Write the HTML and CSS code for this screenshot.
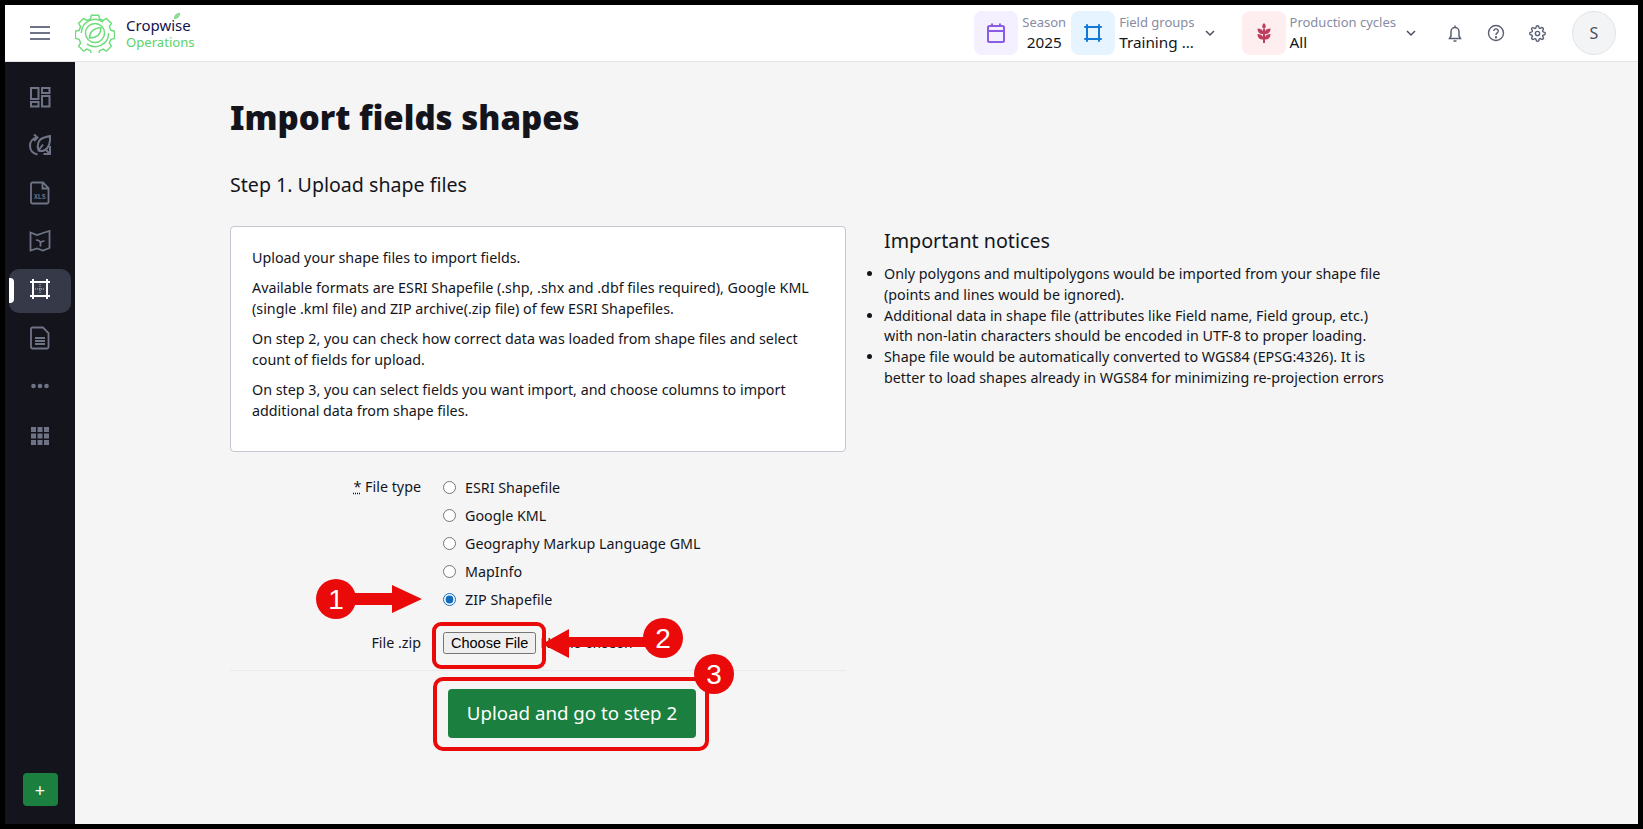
FILE: index.html
```html
<!DOCTYPE html>
<html lang="en">
<head>
    <meta charset="UTF-8">
    <meta name="viewport" content="width=device-width, initial-scale=1.0">
    <title>Cropwise Operations - Import fields shapes</title>
    <link rel="stylesheet" href="styles.css">
</head>
<body>
    <div class="app">
        <header class="topbar">
            <button class="burger" aria-label="Menu"><span></span><span></span><span></span></button>
            <div class="logo">
                <svg class="logo-mark" viewBox="0 0 44 44" width="40" height="40" fill="none" stroke="#6fdc7c" stroke-width="1.600">
                    <path d="M18 2.500h8l1 4 4 1.700 3.500-2.200 5.500 5.500-2.200 3.500 1.700 4 4 1v8l-4 1-1.700 4 2.200 3.500-5.500 5.500-3.500-2.200-4 1.700-1 4h-8l-1-4-4-1.700-3.500 2.200-5.500-5.500 2.200-3.500-1.700-4-4-1v-8l4-1 1.700-4-2.200-3.500 5.500-5.500 3.500 2.200 4-1.700z"/>
                    <path d="M7 22a15 15 0 0 1 24-12M37 22a15 15 0 0 1-24 12"/>
                    <circle cx="22" cy="22" r="10.500"/>
                    <path d="M16 27.500c0-6.500 4.500-10.500 12.500-11.500 0 7-4 11.500-12.500 11.500z"/>
                </svg>
                <div class="logo-text">
                    <span class="logo-name">Cropwise<svg class="logo-leaf" viewBox="0 0 10 10" width="8" height="8"><path d="M1 9c0-5 3-8 8-8 0 5-3 8-8 8z" fill="#8fdc97"/></svg></span>
                    <span class="logo-product">Operations</span>
                </div>
            </div>

            <div class="topbar-right">
                <div class="selector season">
                    <div class="tile tile-purple">
                        <svg viewBox="0 0 24 24" width="24" height="24" fill="none" stroke="#8a5ce6" stroke-width="2"><rect x="4" y="5" width="16" height="16" rx="1.500"/><path d="M4 10h16M8 2.500V5M16 2.500V5"/></svg>
                    </div>
                    <div class="selector-text centered">
                        <span class="selector-label">Season</span>
                        <span class="selector-value">2025</span>
                    </div>
                </div>
                <div class="selector groups">
                    <div class="tile tile-blue">
                        <svg viewBox="0 0 24 24" width="24" height="24" fill="none" stroke="#1479d6" stroke-width="2" stroke-linecap="round"><path d="M6 4v16M18 4v16M4 6h16M4 18h16"/></svg>
                    </div>
                    <div class="selector-text">
                        <span class="selector-label">Field groups</span>
                        <span class="selector-value">Training ...</span>
                    </div>
                    <svg class="chevron" viewBox="0 0 12 12" width="12" height="12" fill="none" stroke="#4a4f5c" stroke-width="1.500"><path d="M2 4l4 4 4-4"/></svg>
                </div>
                <div class="selector cycles">
                    <div class="tile tile-red">
                        <svg viewBox="0 0 24 24" width="24" height="24" fill="#bd3f5f"><path d="M12 2c1.800 1.400 2.200 3.200 1.200 5.500h-2.400C9.800 5.200 10.200 3.400 12 2zM5.500 7.500c2.800 0 4.800 1 5.500 2.800V13c-3.500 0-5.500-1.800-5.500-5.500zM18.500 7.500c-2.800 0-4.800 1-5.500 2.800V13c3.500 0 5.500-1.800 5.500-5.500zM5.500 13c2.800 0 4.800 1 5.500 2.800v2.700c-3.500 0-5.500-1.800-5.500-5.500zM18.500 13c-2.800 0-4.800 1-5.500 2.800v2.700c3.500 0 5.500-1.800 5.500-5.500zM11 8h2v14h-2z"/></svg>
                    </div>
                    <div class="selector-text">
                        <span class="selector-label">Production cycles</span>
                        <span class="selector-value">All</span>
                    </div>
                    <svg class="chevron" viewBox="0 0 12 12" width="12" height="12" fill="none" stroke="#4a4f5c" stroke-width="1.500"><path d="M2 4l4 4 4-4"/></svg>
                </div>
                <div class="tools">
                    <svg viewBox="0 0 20 20" width="20" height="20" fill="none" stroke="#5a5f73" stroke-width="1.500"><path d="M4.500 15.500h11l-1.500-2.500V8.500a4 4 0 0 0-8 0V13zM10 2.500v2M8.500 18h3"/></svg>
                    <svg viewBox="0 0 20 20" width="20" height="20" fill="none" stroke="#5a5f73" stroke-width="1.400"><circle cx="10" cy="10" r="7.500"/><path d="M7.800 8a2.200 2.200 0 1 1 3.400 1.900c-.8.500-1.200 1-1.200 2"/><circle cx="10" cy="14.200" r=".5"/></svg>
                    <svg class="gear" viewBox="0 0 24 24" fill="none" stroke="#5a5f73" stroke-width="2"><circle cx="12" cy="12" r="3"/><path d="M19.400 15a1.650 1.650 0 0 0 .33 1.820l.06.06a2 2 0 0 1 0 2.830 2 2 0 0 1-2.830 0l-.06-.06a1.650 1.650 0 0 0-1.820-.33 1.650 1.650 0 0 0-1 1.510V21a2 2 0 0 1-2 2 2 2 0 0 1-2-2v-.09A1.650 1.650 0 0 0 9 19.400a1.650 1.650 0 0 0-1.820.33l-.06.06a2 2 0 0 1-2.830 0 2 2 0 0 1 0-2.830l.06-.06a1.650 1.650 0 0 0 .33-1.820 1.650 1.650 0 0 0-1.510-1H3a2 2 0 0 1-2-2 2 2 0 0 1 2-2h.09A1.650 1.650 0 0 0 4.600 9a1.650 1.650 0 0 0-.33-1.820l-.06-.06a2 2 0 0 1 0-2.830 2 2 0 0 1 2.830 0l.06.06a1.650 1.650 0 0 0 1.820.33H9a1.650 1.650 0 0 0 1-1.510V3a2 2 0 0 1 2-2 2 2 0 0 1 2 2v.09a1.650 1.650 0 0 0 1 1.510 1.650 1.650 0 0 0 1.820-.33l.06-.06a2 2 0 0 1 2.830 0 2 2 0 0 1 0 2.830l-.06.06a1.650 1.650 0 0 0-.33 1.820V9a1.650 1.650 0 0 0 1.510 1H21a2 2 0 0 1 2 2 2 2 0 0 1-2 2h-.09a1.650 1.650 0 0 0-1.510 1z"/></svg>
                </div>
                <div class="avatar">S</div>
            </div>
        </header>

        <div class="body-row">
            <nav class="sidebar">
                <a class="nav-item"><svg viewBox="0 0 24 24" fill="none" stroke="#6e7385" stroke-width="2"><rect x="3" y="3" width="7.500" height="11"/><rect x="14" y="3" width="7.500" height="5"/><rect x="14" y="11" width="7.500" height="10.500"/><rect x="3" y="17" width="7.500" height="4.500"/></svg></a>
                <a class="nav-item"><svg viewBox="0 0 24 24" fill="none" stroke="#6e7385" stroke-width="2"><path d="M9.500 21.500C4.500 20.500 2 17 2 12.500 2 9 4.500 5.500 8.500 4.500M6 1.500l3.500 3L6 8"/><path d="M10.500 17.500C8.500 12 10.500 6.500 15 5c2-.7 4.500-1.500 7-2 .5 6-1 11.500-5 14-2 1-4.500 1.500-6.500.5zM10.500 17.500l4.500-6"/><path d="M22 13v8h-6.500M22 21l-5-5"/></svg></a>
                <a class="nav-item"><svg viewBox="0 0 24 24" fill="none" stroke="#6e7385" stroke-width="1.800"><path d="M4.500 1.500H15l5.500 5.500v14a1.500 1.500 0 0 1-1.500 1.500H4.500A1.500 1.500 0 0 1 3 21V3a1.500 1.500 0 0 1 1.500-1.500zM14.500 1.500V7.500h6"/><text class="nav-xls" x="11.800" y="17.500" text-anchor="middle">XLS</text></svg></a>
                <a class="nav-item"><svg viewBox="0 0 24 24" fill="none" stroke="#6e7385" stroke-width="1.800"><path d="M2.500 3.500l6.500 2.500 6-2 6.500-2v17L15 21.500 9 19.500l-6.500 2z"/><path d="M12.500 17.500v-3c0-2-2-3.500-4.500-3.500M12.500 14.500c0-1.500 2-2.500 4-2.500" stroke-width="1.700"/></svg></a>
                <a class="nav-item active"><span class="nav-marker"></span><svg viewBox="0 0 24 24" fill="none" stroke="#fff" stroke-width="2"><path d="M5 2v20M19 2v20M2 5h20M2 19h20"/><path d="M12 7v10M7 12h10" stroke-width="1" stroke-dasharray="1 1" stroke="#c9ccd6"/></svg></a>
                <a class="nav-item"><svg viewBox="0 0 24 24" fill="none" stroke="#6e7385" stroke-width="1.800"><path d="M4.500 1.500H15l5.500 5.500v14a1.500 1.500 0 0 1-1.500 1.500H4.500A1.500 1.500 0 0 1 3 21V3a1.500 1.500 0 0 1 1.500-1.500z"/><path d="M7 12h10M7 15h10M7 18h10" stroke-width="1.800"/></svg></a>
                <a class="nav-item"><svg viewBox="0 0 24 24" fill="#6e7385"><circle cx="5.500" cy="12" r="2.300"/><circle cx="12" cy="12" r="2.300"/><circle cx="18.500" cy="12" r="2.300"/></svg></a>
                <a class="nav-item nav-last"><svg viewBox="0 0 24 24" fill="#6e7385"><rect x="3" y="3" width="5" height="5"/><rect x="9.500" y="3" width="5" height="5"/><rect x="16" y="3" width="5" height="5"/><rect x="3" y="9.500" width="5" height="5"/><rect x="9.500" y="9.500" width="5" height="5"/><rect x="16" y="9.500" width="5" height="5"/><rect x="3" y="16" width="5" height="5"/><rect x="9.500" y="16" width="5" height="5"/><rect x="16" y="16" width="5" height="5"/></svg></a>
                <button class="add-btn" aria-label="Add">+</button>
            </nav>

            <main class="content">
                <h1>Import fields shapes</h1>
                <h2>Step 1. Upload shape files</h2>
                <div class="columns">
                    <div class="left-col">
                        <div class="info-box">
                            <p>Upload your shape files to import fields.</p>
                            <p>Available formats are ESRI Shapefile (.shp, .shx and .dbf files required), Google KML (single .kml file) and ZIP archive(.zip file) of few ESRI Shapefiles.</p>
                            <p>On step 2, you can check how correct data was loaded from shape files and select count of fields for upload.</p>
                            <p>On step 3, you can select fields you want import, and choose columns to import additional data from shape files.</p>
                        </div>
                        <form class="upload-form">
                            <div class="form-row">
                                <label class="form-label"><abbr>*</abbr> File type</label>
                                <div class="radio-list">
                                    <label class="radio"><input type="radio" name="file_type"> ESRI Shapefile</label>
                                    <label class="radio"><input type="radio" name="file_type"> Google KML</label>
                                    <label class="radio"><input type="radio" name="file_type"> Geography Markup Language GML</label>
                                    <label class="radio"><input type="radio" name="file_type"> MapInfo</label>
                                    <label class="radio"><input type="radio" name="file_type" checked> ZIP Shapefile</label>
                                </div>
                            </div>
                            <div class="form-row file-row">
                                <label class="form-label">File .zip</label>
                                <input type="file" class="file-input">
                            </div>
                            <div class="form-actions">
                                <button type="button" class="submit-btn">Upload and go to step 2</button>
                            </div>
                        </form>
                    </div>
                    <aside class="notices">
                        <h3>Important notices</h3>
                        <ul>
                            <li>Only polygons and multipolygons would be imported from your shape file (points and lines would be ignored).</li>
                            <li>Additional data in shape file (attributes like Field name, Field group, etc.) with non-latin characters should be encoded in UTF-8 to proper loading.</li>
                            <li>Shape file would be automatically converted to WGS84 (EPSG:4326). It is better to load shapes already in WGS84 for minimizing re-projection errors</li>
                        </ul>
                    </aside>
                </div>
            </main>
        </div>

        <!-- callouts drawn on top of the screenshot -->
        <svg class="callouts" viewBox="0 0 1643 829" width="1643" height="829">
            <g fill="#ea0a0a">
                <path d="M336 593h56v-8l30 14-30 14v-8h-56z"/>
                <path d="M542 644l27-15v8h85v10h-85v11z"/>
                <circle cx="336" cy="599" r="20"/>
                <circle cx="663" cy="638" r="20"/>
                <circle cx="714" cy="674" r="20"/>
            </g>
            <g fill="none" stroke="#ea0a0a" stroke-width="4">
                <rect x="434" y="624" width="110" height="43" rx="7"/>
                <rect x="435" y="679" width="272" height="70" rx="8"/>
            </g>
            <g class="callout-num">
                <text x="336" y="609" text-anchor="middle">1</text>
                <text x="663" y="648" text-anchor="middle">2</text>
                <text x="714" y="684" text-anchor="middle">3</text>
            </g>
        </svg>
    </div>
</body>
</html>
```

FILE: styles.css
```css
* {
    box-sizing: border-box;
}

html, body {
    margin: 0;
    height: 100%;
}

body {
    background: #000;
    padding: 5px;
    font-family: "Noto Sans", sans-serif;
    font-size: 14.3px;
    color: #14151c;
    overflow: hidden;
}

.app {
    height: 100%;
    display: flex;
    flex-direction: column;
    background: #f5f5f5;
}

/* top bar */
.topbar {
    height: 57px;
    flex: none;
    display: flex;
    align-items: center;
    background: #fff;
    border-bottom: 1px solid #e2e3e6;
}

.burger {
    width: 20px;
    height: 14px;
    margin: 0 25px 0 25px;
    padding: 0;
    border: 0;
    background: none;
    display: flex;
    flex-direction: column;
    justify-content: space-between;
}

.burger span {
    display: block;
    height: 2px;
    background: #6e7385;
}

.logo {
    display: flex;
    align-items: center;
    gap: 11px;
}

.logo-text {
    display: flex;
    flex-direction: column;
    line-height: 17px;
    margin-top: 2px;
}

.logo-name {
    position: relative;
    font-size: 15px;
    color: #14134e;
}

.logo-leaf {
    position: absolute;
    left: 47px;
    top: -5px;
}

.logo-product {
    font-size: 13.1px;
    color: #5bd36a;
}

.topbar-right {
    margin-left: auto;
    display: flex;
    align-items: center;
    padding-right: 22px;
}

.selector {
    display: flex;
    align-items: center;
}

.season {
    margin-right: 5px;
}

.groups {
    margin-right: 26px;
}

.tile {
    width: 44px;
    height: 44px;
    border-radius: 8px;
    display: flex;
    align-items: center;
    justify-content: center;
    margin-right: 4px;
}

.tile-purple {
    background: #f5f0ff;
}

.tile-blue {
    background: #e6f4ff;
}

.tile-red {
    background: #ffeef0;
}

.selector-text {
    display: flex;
    flex-direction: column;
}

.selector-text.centered {
    align-items: center;
}

.selector-label {
    font-size: 13px;
    line-height: 18px;
    color: #868ca2;
}

.selector-value {
    font-size: 15.3px;
    line-height: 22px;
    color: #14151c;
}

.chevron {
    margin-left: 9px;
}

.tools {
    display: flex;
    gap: 21px;
    margin-left: 28px;
}

.gear {
    width: 17px;
    height: 17px;
    margin: 1.5px;
}

.avatar {
    width: 44px;
    height: 44px;
    margin-left: 25px;
    border-radius: 50%;
    background: #f3f4f6;
    border: 1px solid #e2e3e6;
    display: flex;
    align-items: center;
    justify-content: center;
    font-size: 16px;
    color: #4a4f5c;
}

/* sidebar */
.body-row {
    flex: 1;
    display: flex;
    min-height: 0;
}

.sidebar {
    width: 70px;
    flex: none;
    background: #14151c;
    display: flex;
    flex-direction: column;
    align-items: center;
    padding: 11px 0 18px;
}

.nav-item {
    position: relative;
    width: 62px;
    height: 48px;
    flex: none;
    display: flex;
    align-items: center;
    justify-content: center;
}

.nav-item svg {
    width: 24px;
    height: 24px;
}

.nav-item.active {
    height: 44px;
    margin: 4px 0 1px;
    padding-bottom: 4px;
    border-radius: 10px;
    background: #363a48;
}

.nav-last {
    margin-top: 2px;
}

.nav-marker {
    position: absolute;
    left: 0;
    top: 9px;
    width: 5px;
    height: 25px;
    border-radius: 0 4px 4px 0;
    background: #fff;
}

.nav-xls {
    font-family: "Liberation Mono", monospace;
    font-size: 6.500px;
    font-weight: bold;
    fill: #6e7385;
    stroke: none;
}

.add-btn {
    margin-top: auto;
    width: 35px;
    height: 33px;
    border: 0;
    border-radius: 4px;
    background: #1b7f3f;
    color: #fff;
    font-family: "Noto Sans", sans-serif;
    font-size: 18px;
    line-height: 1;
    padding: 0;
}

/* page content */
.content {
    flex: 1;
    padding: 0 0 0 155px;
    min-width: 0;
}

h1 {
    margin: 34px 0 0;
    font-size: 33px;
    line-height: 44px;
    font-weight: 900;
    color: #14151c;
}

h2 {
    margin: 30px 0 0;
    font-size: 19.6px;
    line-height: 30px;
    font-weight: 400;
}

.columns {
    display: flex;
    gap: 38px;
    margin-top: 26px;
}

.left-col {
    width: 616px;
    flex: none;
}

.info-box {
    height: 226px;
    padding: 20px 21px 0;
    background: #fff;
    border: 1px solid #c2c7d0;
    border-radius: 4px;
}

.info-box p {
    margin: 0 0 9px;
    line-height: 21px;
}

.upload-form {
    margin-top: 21px;
}

.form-row {
    display: flex;
}

.form-label {
    width: 191px;
    flex: none;
    text-align: right;
    line-height: 28px;
}

.form-label abbr {
    text-decoration: underline dotted;
}

.radio-list {
    margin-left: 21px;
    display: flex;
    flex-direction: column;
}

.radio {
    display: flex;
    align-items: center;
    height: 28px;
    gap: 9px;
}

.radio input {
    width: 13px;
    height: 13px;
    margin: 1px 0 0 1px;
    accent-color: #0f6cbd;
}

.file-row {
    margin-top: 16px;
    align-items: center;
}

.file-input {
    margin-left: 22px;
    font-family: "Liberation Sans", sans-serif;
    font-size: 14.5px;
}

.form-actions {
    margin-top: 13px;
    padding: 18px 0 0 218px;
    border-top: 1px solid #e8e9ec;
    display: flex;
}

.submit-btn {
    width: 248px;
    height: 49px;
    padding: 0 0 2px;
    border: 0;
    border-radius: 4px;
    background: #1b7f3f;
    color: #fff;
    font-family: "Noto Sans", sans-serif;
    font-size: 18.7px;
}

.notices {
    width: 510px;
}

.notices h3 {
    margin: 1px 0 9px;
    font-size: 19.7px;
    line-height: 28px;
    font-weight: 400;
}

.notices ul {
    margin: 0;
    padding-left: 0;
}

.notices li {
    line-height: 20.8px;
}

/* callouts overlay */
.callouts {
    position: absolute;
    left: 0;
    top: 0;
    pointer-events: none;
}

.callout-num {
    font-family: "Liberation Sans", sans-serif;
    font-size: 28px;
    fill: #fff;
}
```
